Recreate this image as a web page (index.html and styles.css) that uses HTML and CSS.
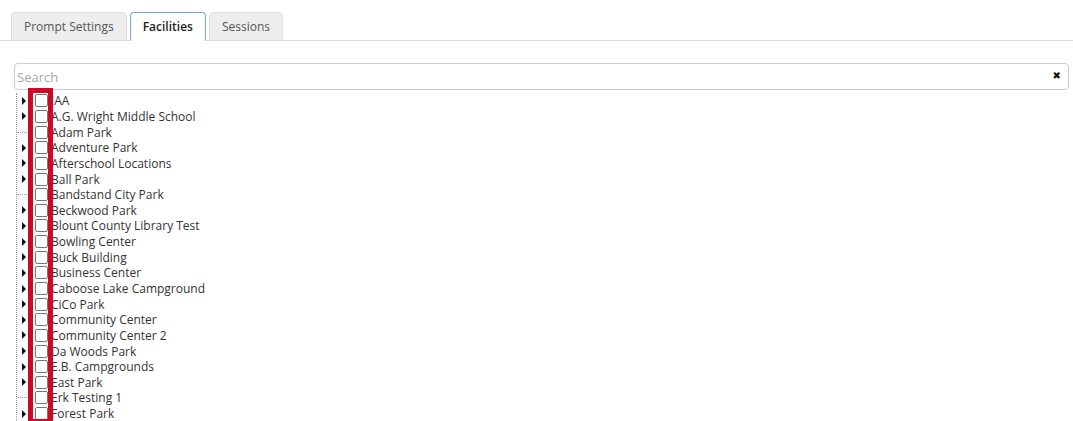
FILE: index.html
```html
<!DOCTYPE html>
<html lang="en">
<head>
    <meta charset="UTF-8">
    <title>Facilities</title>
    <link rel="stylesheet" href="styles.css">
</head>
<body>

    <!-- Tabs -->
    <div class="tabs">
        <div class="tab">Prompt Settings</div>
        <div class="tab active">Facilities</div>
        <div class="tab">Sessions</div>
    </div>

    <!-- Search -->
    <div class="search">
        <input type="text" placeholder="Search">
        <span class="clear">&#x2716;</span>
    </div>

    <!-- Facility tree -->
    <div class="tree-wrap">
        <div class="tree">
            <div class="node"><span class="toggle"><i class="arrow"></i></span><span class="check"></span><span class="label">!AA</span></div>
            <div class="node"><span class="toggle"><i class="arrow"></i></span><span class="check"></span><span class="label">A.G. Wright Middle School</span></div>
            <div class="node"><span class="toggle"><i class="leaf"></i></span><span class="check"></span><span class="label">Adam Park</span></div>
            <div class="node"><span class="toggle"><i class="arrow"></i></span><span class="check"></span><span class="label">Adventure Park</span></div>
            <div class="node"><span class="toggle"><i class="arrow"></i></span><span class="check"></span><span class="label">Afterschool Locations</span></div>
            <div class="node"><span class="toggle"><i class="arrow"></i></span><span class="check"></span><span class="label">Ball Park</span></div>
            <div class="node"><span class="toggle"><i class="leaf"></i></span><span class="check"></span><span class="label">Bandstand City Park</span></div>
            <div class="node"><span class="toggle"><i class="arrow"></i></span><span class="check"></span><span class="label">Beckwood Park</span></div>
            <div class="node"><span class="toggle"><i class="arrow"></i></span><span class="check"></span><span class="label">Blount County Library Test</span></div>
            <div class="node"><span class="toggle"><i class="arrow"></i></span><span class="check"></span><span class="label">Bowling Center</span></div>
            <div class="node"><span class="toggle"><i class="arrow"></i></span><span class="check"></span><span class="label">Buck Building</span></div>
            <div class="node"><span class="toggle"><i class="arrow"></i></span><span class="check"></span><span class="label">Business Center</span></div>
            <div class="node"><span class="toggle"><i class="arrow"></i></span><span class="check"></span><span class="label">Caboose Lake Campground</span></div>
            <div class="node"><span class="toggle"><i class="arrow"></i></span><span class="check"></span><span class="label">CiCo Park</span></div>
            <div class="node"><span class="toggle"><i class="arrow"></i></span><span class="check"></span><span class="label">Community Center</span></div>
            <div class="node"><span class="toggle"><i class="arrow"></i></span><span class="check"></span><span class="label">Community Center 2</span></div>
            <div class="node"><span class="toggle"><i class="arrow"></i></span><span class="check"></span><span class="label">Da Woods Park</span></div>
            <div class="node"><span class="toggle"><i class="arrow"></i></span><span class="check"></span><span class="label">E.B. Campgrounds</span></div>
            <div class="node"><span class="toggle"><i class="arrow"></i></span><span class="check"></span><span class="label">East Park</span></div>
            <div class="node"><span class="toggle"><i class="leaf"></i></span><span class="check"></span><span class="label">Erk Testing 1</span></div>
            <div class="node"><span class="toggle"><i class="arrow"></i></span><span class="check"></span><span class="label">Forest Park</span></div>
        </div>

        <!-- Highlight around the checkbox column -->
        <div class="highlight"></div>
    </div>

</body>
</html>
```

FILE: styles.css
```css
/* Page */
html, body {
    margin: 0;
    height: 100%;
    overflow: hidden;
    background: #fff;
    font-family: "Open Sans", "Liberation Sans", sans-serif;
    color: #333;
}

/* Tabs */
.tabs {
    display: flex;
    gap: 3px;
    padding: 12px 0 0 11px;
    border-bottom: 1px solid #ddd;
}
.tab {
    height: 27px;
    line-height: 27px;
    padding: 0 12px;
    margin-bottom: -1px;
    font-size: 12px;
    color: #555;
    background: #eee;
    border: 1px solid #ddd;
    border-radius: 4px 4px 0 0;
}
.tab.active {
    color: #222;
    font-weight: 600;
    background: #fff;
    border-color: #79a6d2;
    border-bottom-color: #fff;
}

/* Search */
.search {
    position: relative;
    margin: 22px 4px 0 14px;
}
.search input {
    box-sizing: border-box;
    width: 100%;
    height: 27px;
    padding: 0 2px;
    font-family: "Open Sans", "Liberation Sans", sans-serif;
    font-size: 13px;
    color: #333;
    border: 1px solid #ccc;
    border-radius: 4px;
    outline: none;
}
.search input::placeholder {
    color: #a8a8a8;
}
.clear {
    position: absolute;
    right: 8px;
    top: 7px;
    font-size: 10px;
    line-height: 12px;
    color: #111;
    font-family: "DejaVu Sans", sans-serif;
}

/* Tree */
.tree-wrap {
    position: relative;
    margin-top: 3px;
}
.tree {
    margin-left: 16px;
    border-left: 1px dotted #999;
}
.node {
    display: flex;
    align-items: center;
    height: 15.65px;
    font-size: 12px;
    white-space: nowrap;
}
.toggle {
    display: flex;
    align-items: center;
    width: 18px;
    height: 100%;
}
.arrow {
    margin-left: 5px;
    width: 0;
    height: 0;
    border-left: 4px solid #111;
    border-top: 4px solid transparent;
    border-bottom: 4px solid transparent;
}
.leaf {
    width: 12px;
    border-top: 1px dotted #999;
}
.check {
    box-sizing: border-box;
    width: 13px;
    height: 13px;
    border: 1px solid #777;
    border-radius: 2px;
    background: #fff;
}
.label {
    margin-left: 3px;
    line-height: 15px;
}

/* Red highlight box */
.highlight {
    position: absolute;
    left: 28px;
    top: -5px;
    width: 15px;
    height: 326px;
    border: 5px solid #cc0a26;
}
```
